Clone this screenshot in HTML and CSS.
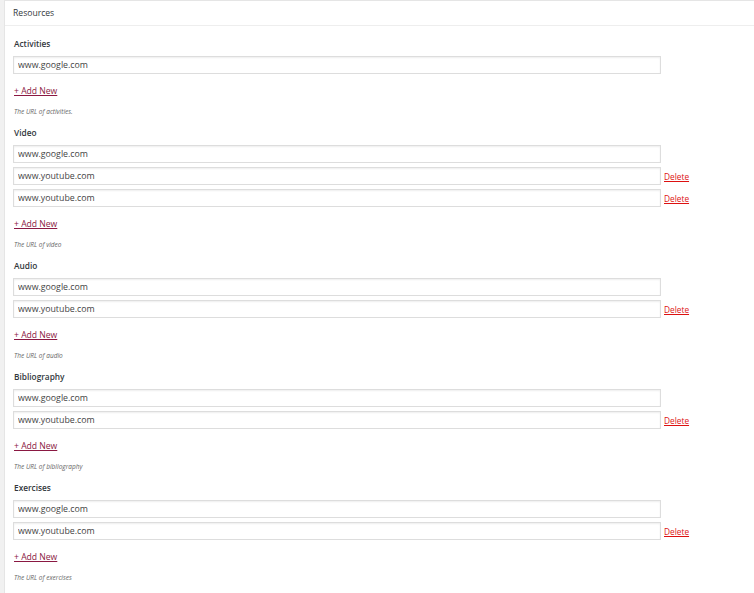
FILE: index.html
```html
<!DOCTYPE html>
<html lang="en">
<head>
<meta charset="utf-8">
<title>Resources</title>
<link rel="stylesheet" href="styles.css">
</head>
<body>
<div class="postbox">
  <h2 class="hndle">Resources</h2>
  <div class="inside">
    <div class="field">
      <div class="label">Activities</div>
      <div class="rows">
        <div class="row"><input class="url" type="text" value="www.google.com"></div>
      </div>
      <a class="add" href="#">+ Add New</a>
      <p class="desc">The URL of activities.</p>
    </div>
    <div class="field">
      <div class="label">Video</div>
      <div class="rows">
        <div class="row"><input class="url" type="text" value="www.google.com"></div>
        <div class="row"><input class="url" type="text" value="www.youtube.com"><a class="del" href="#">Delete</a></div>
        <div class="row"><input class="url" type="text" value="www.youtube.com"><a class="del" href="#">Delete</a></div>
      </div>
      <a class="add" href="#">+ Add New</a>
      <p class="desc">The URL of video</p>
    </div>
    <div class="field">
      <div class="label">Audio</div>
      <div class="rows">
        <div class="row"><input class="url" type="text" value="www.google.com"></div>
        <div class="row"><input class="url" type="text" value="www.youtube.com"><a class="del" href="#">Delete</a></div>
      </div>
      <a class="add" href="#">+ Add New</a>
      <p class="desc">The URL of audio</p>
    </div>
    <div class="field">
      <div class="label">Bibliography</div>
      <div class="rows">
        <div class="row"><input class="url" type="text" value="www.google.com"></div>
        <div class="row"><input class="url" type="text" value="www.youtube.com"><a class="del" href="#">Delete</a></div>
      </div>
      <a class="add" href="#">+ Add New</a>
      <p class="desc">The URL of bibliography</p>
    </div>
    <div class="field">
      <div class="label">Exercises</div>
      <div class="rows">
        <div class="row"><input class="url" type="text" value="www.google.com"></div>
        <div class="row"><input class="url" type="text" value="www.youtube.com"><a class="del" href="#">Delete</a></div>
      </div>
      <a class="add" href="#">+ Add New</a>
      <p class="desc">The URL of exercises</p>
    </div>
  </div>
</div>
</body>
</html>
```
FILE: styles.css
```css
html, body {
  margin: 0;
  padding: 0;
  background: #f1f1f1;
  overflow: hidden;
}
body {
  padding-left: 4px;
  font-family: "Open Sans", "Noto Sans", sans-serif;
  color: #32373c;
}
.postbox {
  background: #fff;
  border-top: 1px solid #e5e5e5;
  border-left: 1px solid #e5e5e5;
  min-height: 600px;
}
.hndle {
  margin: 0;
  height: 24px;
  line-height: 24px;
  padding-left: 8px;
  font-size: 8.6px;
  font-weight: 400;
  color: #32373c;
  border-bottom: 1px solid #eee;
}
.inside {
  padding: 12px 8px 0 8px;
}
.field {
  display: flex;
  flex-direction: column;
  align-items: flex-start;
  margin-bottom: 10px;
}
.label {
  height: 12px;
  line-height: 12px;
  font-size: 8.3px;
  font-weight: 600;
  color: #32373c;
  padding-left: 1px;
  margin-bottom: 6px;
}
.rows {
  display: flex;
  flex-direction: column;
  gap: 4px;
}
.row {
  display: flex;
  align-items: center;
}
.url {
  box-sizing: border-box;
  width: 648px;
  height: 18px;
  margin: 0;
  padding: 0 4px;
  border: 1px solid #ddd;
  box-shadow: inset 0 1px 2px rgba(0,0,0,.07);
  font-family: "Open Sans", "Noto Sans", sans-serif;
  font-size: 8.8px;
  color: #444;
  background: #fff;
  outline: none;
}
.del {
  margin-left: 3px;
  font-size: 8.3px;
  color: #dd1111;
  text-decoration: underline;
}
.add {
  display: block;
  margin-top: 11px;
  height: 12px;
  line-height: 12px;
  padding-left: 1px;
  font-size: 8.6px;
  color: #8a1842;
  text-decoration: underline;
}
.desc {
  margin: 10px 0 0 0;
  height: 10px;
  line-height: 10px;
  padding-left: 1px;
  font-size: 6.5px;
  font-style: italic;
  color: #666;
}
```
